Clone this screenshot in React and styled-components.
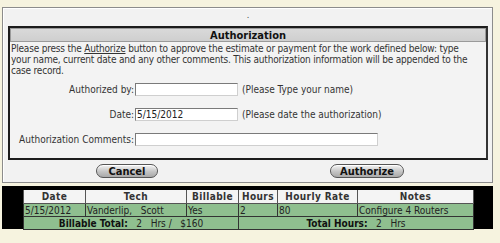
import React from 'react'
import styled, { createGlobalStyle } from 'styled-components'

const GlobalStyle = createGlobalStyle`
  html, body {
    margin: 0;
    padding: 0;
    background: #f6f3df;
  }
  body {
    font-family: 'DejaVu Sans Condensed', 'DejaVu Sans', sans-serif;
    font-size: 10px;
    color: #222;
  }
`

const Page = styled.div`
  width: 500px;
  height: 243px;
  padding: 7px 7px 0 2px;
  box-sizing: border-box;
`

const Panel = styled.div`
  background: #f2f2f2;
  border: 1px solid #8c8c8c;
  box-shadow: inset 1px 1px 0 #ffffff;
  padding: 0 4px 5px 5px;
  height: 176px;
  box-sizing: border-box;
`

const Dot = styled.div`
  height: 18px;
  text-align: center;
  line-height: 14px;
  font-size: 9px;
  color: #444;
`

const AuthBox = styled.div`
  border: 2px solid #1c1c1c;
  border-right-color: #333;
  background: #f3f3f3;
  height: 134px;
  box-sizing: border-box;
`

const Header = styled.div`
  background: linear-gradient(#d9d9d9, #cfcfcf);
  border: 1px solid #9a9a9a;
  height: 14px;
  line-height: 13px;
  text-align: center;
  font-weight: bold;
  font-size: 11px;
  color: #111;
  box-sizing: border-box;
`

const Intro = styled.div`
  margin: 1px 0 0 1px;
  line-height: 11px;
  letter-spacing: -0.2px;
  color: #333;
`

const IntroLine = styled.div`
  white-space: nowrap;
`

const Form = styled.div`
  display: flex;
  flex-direction: column;
  gap: 12px;
  margin-top: 7px;
`

const Row = styled.div`
  display: flex;
  align-items: center;
  height: 13px;
`

const Label = styled.label`
  width: 124px;
  text-align: right;
  color: #333;
`

const Field = styled.input`
  width: ${({ $wide }) => ($wide ? '243px' : '103px')};
  height: 13px;
  box-sizing: border-box;
  border: 1px solid #7a7a7a;
  border-right-color: #cfcfcf;
  border-bottom-color: #cfcfcf;
  background: #fff;
  font: inherit;
  color: #222;
  padding: 0 1px;
  margin: 0 4px 0 1px;
`

const Hint = styled.span`
  color: #333;
`

const Buttons = styled.div`
  display: flex;
  height: 22px;
  align-items: center;
`

const Btn = styled.button`
  margin-left: ${({ $left }) => $left}px;
  width: ${({ $w }) => $w}px;
  height: 14px;
  border-radius: 7px;
  border: 1px solid #555;
  background: linear-gradient(#f4f4f4, #c4c4c4 55%, #a9a9a9);
  box-shadow: inset 0 1px 0 #fff;
  font-family: inherit;
  font-size: 11px;
  font-weight: bold;
  line-height: 11px;
  color: #111;
  padding: 0;
`

const Grid = styled.div`
  margin-top: 3px;
  background: #000;
  height: 43px;
  padding: 4px 0 0 21px;
  box-sizing: border-box;
  width: 491px;
`

const Table = styled.table`
  border-collapse: collapse;
  width: 450px;
  table-layout: fixed;
  font-size: 10px;
`

const Th = styled.th`
  background: #f4f4f4;
  border: 1px solid #555;
  border-top: none;
  height: 13px;
  padding: 0;
  font-weight: bold;
  color: #333;
  letter-spacing: 0.4px;
`

const Td = styled.td`
  background: #8fbf8f;
  border: 1px solid #333;
  height: 12px;
  padding: 0 1px;
  color: #222;
  text-align: ${({ $center }) => ($center ? 'center' : 'left')};
  white-space: nowrap;
  & b {
    color: #111;
  }
`

const cols = [62, 101, 52, 39, 80, 116]

const App = () => (
  <>
    <GlobalStyle />
    <Page>
      <Panel>
        <Dot>.</Dot>
        <AuthBox>
          <Header>Authorization</Header>
          <Intro>
            <IntroLine>
              Please press the <u>Authorize</u> button to approve the estimate or payment for the work defined below: type
            </IntroLine>
            <IntroLine>
              your name, current date and any other comments. This authorization information will be appended to the
            </IntroLine>
            <IntroLine>case record.</IntroLine>
          </Intro>
          <Form>
            <Row>
              <Label>Authorized by:</Label>
              <Field defaultValue='' />
              <Hint>(Please Type your name)</Hint>
            </Row>
            <Row>
              <Label>Date:</Label>
              <Field defaultValue='5/15/2012' />
              <Hint>(Please date the authorization)</Hint>
            </Row>
            <Row>
              <Label>Authorization Comments:</Label>
              <Field $wide defaultValue='' />
            </Row>
          </Form>
        </AuthBox>
        <Buttons>
          <Btn $left={88} $w={62}>Cancel</Btn>
          <Btn $left={172} $w={74}>Authorize</Btn>
        </Buttons>
      </Panel>
      <Grid>
        <Table>
          <colgroup>
            {cols.map((w, i) => (
              <col key={i} style={{ width: w }} />
            ))}
          </colgroup>
          <thead>
            <tr>
              <Th>Date</Th>
              <Th>Tech</Th>
              <Th>Billable</Th>
              <Th>Hours</Th>
              <Th>Hourly Rate</Th>
              <Th>Notes</Th>
            </tr>
          </thead>
          <tbody>
            <tr>
              <Td>5/15/2012</Td>
              <Td>Vanderlip,&nbsp;&nbsp; Scott</Td>
              <Td>Yes</Td>
              <Td>2</Td>
              <Td>80</Td>
              <Td>Configure 4 Routers</Td>
            </tr>
            <tr>
              <Td $center colSpan={3}>
                <b>Billable Total:</b>&nbsp;&nbsp; 2 &nbsp; Hrs / &nbsp; $160
              </Td>
              <Td $center colSpan={3}>
                <b>Total Hours:</b>&nbsp;&nbsp; 2 &nbsp; Hrs
              </Td>
            </tr>
          </tbody>
        </Table>
      </Grid>
    </Page>
  </>
)

export default App
